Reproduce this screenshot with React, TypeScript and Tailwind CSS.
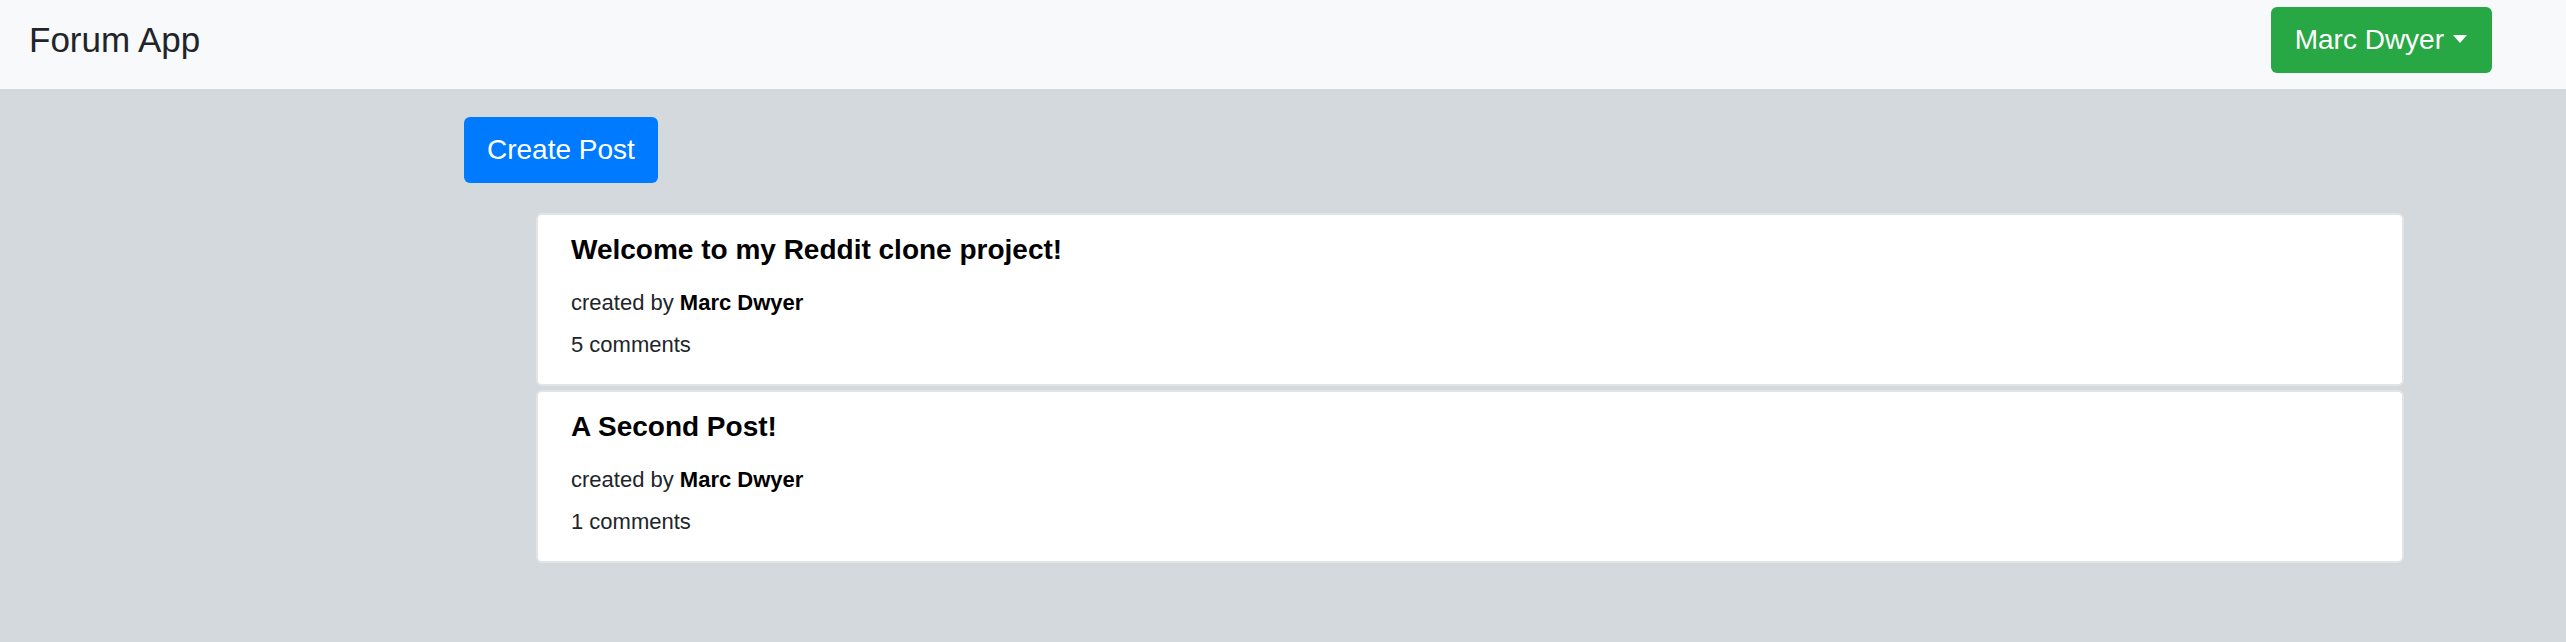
const posts = [
  { id: 1, title: "Welcome to my Reddit clone project!", author: "Marc Dwyer", comments: 5 },
  { id: 2, title: "A Second Post!", author: "Marc Dwyer", comments: 1 },
];

const Navbar = () => {
  return (
    <nav className="flex items-center justify-between bg-[#f8f9fa] pl-[29px] pr-[74px] pt-[7px] pb-[16px] h-[89px]">
      <span className="text-[35px] leading-[1.5] text-[#212529]">Forum App</span>
      <button className="flex items-center gap-[9px] h-[66px] pl-[24px] pr-[25px] rounded-[6px] bg-[#28a745] text-white text-[28px] leading-[42px]">
        Marc Dwyer
        <span className="w-0 h-0 mb-[3px] border-t-[8px] border-t-white border-x-[7px] border-x-transparent" />
      </button>
    </nav>
  );
};

const PostCard = ({ post }: { post: any }) => {
  return (
    <div className="bg-white border-2 border-[#e2e4e6] rounded-[6px] pl-[33px] pr-6 pt-[18px] pb-[23px]">
      <h2 className="text-[28px] leading-[34px] font-bold text-black">{post.title}</h2>
      <p className="mt-[20px] text-[22px] leading-[32px] text-[#212529]">
        created by <b className="font-bold text-black">{post.author}</b>
      </p>
      <p className="mt-[10px] text-[22px] leading-[32px] text-[#212529]">{post.comments} comments</p>
    </div>
  );
};

export default function App() {
  return (
    <div
      className="min-h-screen bg-[#d4d9dd]"
      style={{ fontFamily: '"Liberation Sans", Arial, sans-serif' }}
    >
      <Navbar />
      <main className="pl-[464px] pt-[28px]">
        <button className="h-[66px] px-[23px] rounded-[6px] bg-[#007bff] text-white text-[28px] leading-[42px]">
          Create Post
        </button>
        <div className="mt-[30px] ml-[72px] w-[1868px] flex flex-col gap-[4px]">
          {posts.map((post) => (
            <PostCard key={post.id} post={post} />
          ))}
        </div>
      </main>
    </div>
  );
}
